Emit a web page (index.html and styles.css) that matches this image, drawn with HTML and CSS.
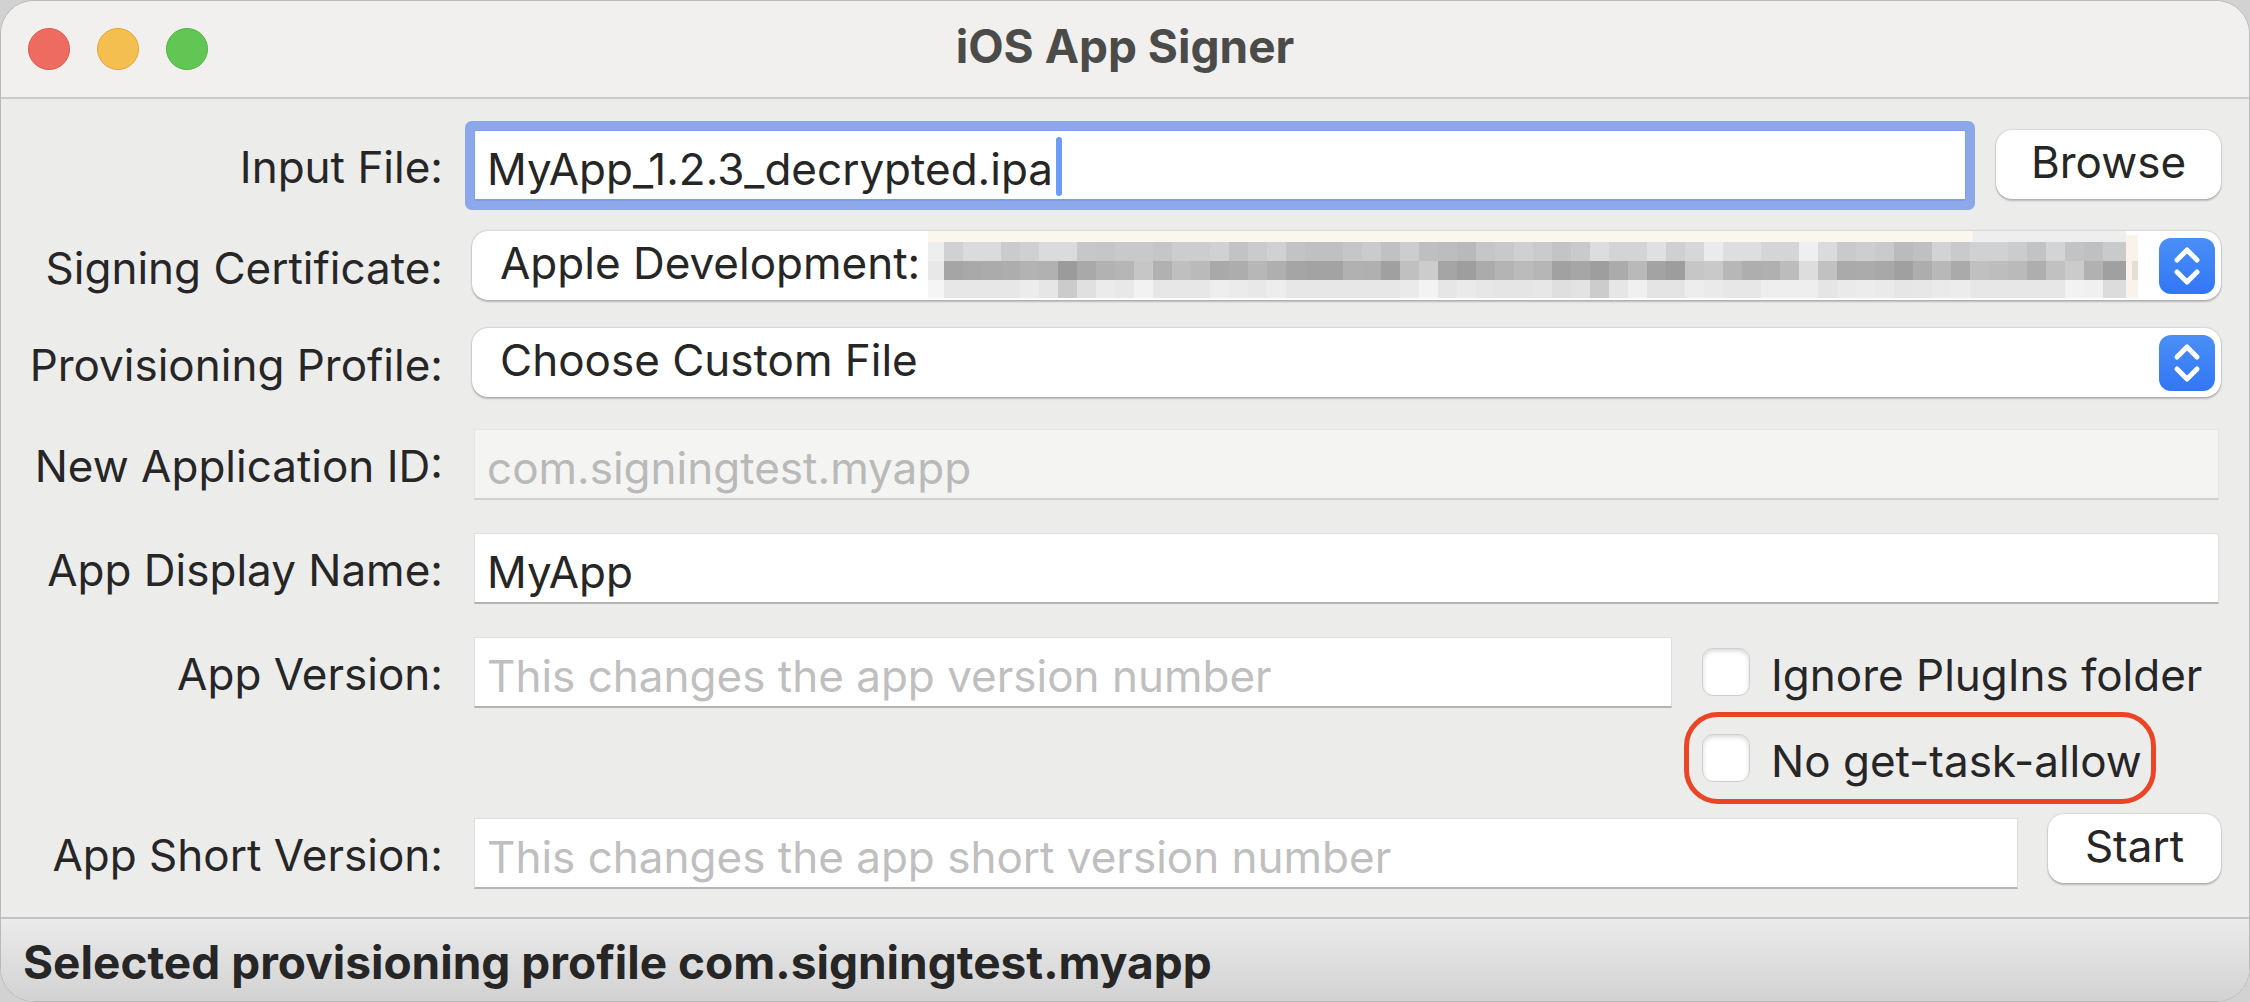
FILE: index.html
```html
<!DOCTYPE html>
<html lang="en">
<head>
  <meta charset="UTF-8" />
  <meta name="viewport" content="width=device-width, initial-scale=1.0"/>
  <title>iOS App Signer</title>
  <link rel="stylesheet" href="styles.css">
</head>
<body>
  <div class="window">
    <header class="titlebar">
      <div class="lights">
        <button class="light close" aria-label="Close"></button>
        <button class="light minimize" aria-label="Minimize"></button>
        <button class="light zoom" aria-label="Zoom"></button>
      </div>
      <h1>iOS App Signer</h1>
    </header>

    <form class="form" onsubmit="return false">
      <div class="row">
        <label class="name" for="input-file">Input File:</label>
        <div class="field focused">
          <input type="text" id="input-file" value="MyApp_1.2.3_decrypted.ipa">
          <span class="caret"></span>
        </div>
        <button class="btn browse" type="button">Browse</button>
      </div>

      <div class="row popup-row">
        <label class="name" for="certificate">Signing Certificate:</label>
        <div class="popup">
          <select id="certificate">
            <option>Apple Development:</option>
          </select>
          <svg class="mosaic" id="mosaic" viewBox="0 0 1210 67" preserveAspectRatio="none" shape-rendering="crispEdges" aria-hidden="true"></svg>
          <svg class="arrows" viewBox="0 0 56 56" aria-hidden="true">
            <path d="M18 22 L28 12 L38 22 M18 34 L28 44 L38 34"/>
          </svg>
        </div>
      </div>

      <div class="row popup-row">
        <label class="name" for="profile">Provisioning Profile:</label>
        <div class="popup">
          <select id="profile">
            <option>Choose Custom File</option>
          </select>
          <svg class="arrows" viewBox="0 0 56 56" aria-hidden="true">
            <path d="M18 22 L28 12 L38 22 M18 34 L28 44 L38 34"/>
          </svg>
        </div>
      </div>

      <div class="row">
        <label class="name" for="app-id">New Application ID:</label>
        <div class="field">
          <input type="text" id="app-id" value="com.signingtest.myapp" disabled>
        </div>
      </div>

      <div class="row name-row">
        <label class="name" for="display-name">App Display Name:</label>
        <div class="field">
          <input type="text" id="display-name" value="MyApp">
        </div>
      </div>

      <div class="row version-row">
        <label class="name" for="version">App Version:</label>
        <div class="field">
          <input type="text" id="version" placeholder="This changes the app version number">
        </div>
        <div class="checks">
          <label class="check"><input type="checkbox"> Ignore PlugIns folder</label>
          <label class="check marked"><input type="checkbox"> No get-task-allow</label>
        </div>
      </div>

      <div class="row start-row">
        <label class="name" for="short-version">App Short Version:</label>
        <div class="field">
          <input type="text" id="short-version" placeholder="This changes the app short version number">
        </div>
        <button class="btn start" type="submit">Start</button>
      </div>
    </form>

    <footer class="status">Selected provisioning profile com.signingtest.myapp</footer>
  </div>

  <script>
    // grey levels of the redacted name, two hex digits per block
    const levels = [
      { y: 11, h: 19, edge: 'ee', row: 'd0dadacacfdadac6c5c8c8c5ccccd0c2cad0c2bfbfc5cac0ccbebcb8c5c8cfcac3c9dcd3d3dfcfd6eaddddd4d4eedac9cdc9babfd2c9d0d0cbc2d3c2bfc9' },
      { y: 30, h: 19, edge: 'e8', row: 'a5a9abadb3b19ba9b2b6c6b1bfbaa9adb7afa5a3a3b1b0a0c0cca59eabb4bbb6a1a69eabb9a39dc6c9b7aeb0bcddc1aaaba8a0adb8aac0bdbaaec1cbb1a0' },
      { y: 49, h: 18, edge: 'f5', row: 'e7e7e7e7ece6cbe0ebe8f2e7e7e7eeebe8ede7e7e7e7e7e7eaf3e6eae7e5e5e7dfe3cce6f0e4e4edeae7e7eeeeeee5eaeceae6e7eaece7e7e7e7e7f2f0dc' }
    ];
    const mosaic = document.getElementById('mosaic');

    function block(x, y, w, h, fill) {
      const rect = document.createElementNS('http://www.w3.org/2000/svg', 'rect');
      rect.setAttribute('x', x);
      rect.setAttribute('y', y);
      rect.setAttribute('width', w);
      rect.setAttribute('height', h);
      rect.setAttribute('fill', fill);
      mosaic.appendChild(rect);
    }

    block(0, 0, 1045, 11, '#fbf6ee');
    block(1045, 0, 153, 11, '#eeeeee');
    block(1198, 4, 12, 63, '#f9f3ec');
    block(1204, 30, 6, 19, '#e6ddd5');

    levels.forEach(({ y, h, edge, row }) => {
      block(0, y, 16, h, '#' + edge + edge + edge);
      row.match(/../g).forEach((hex, i) => {
        const v = parseInt(hex, 16);
        const cool = y === 11 ? 2 : 0;
        block(16 + i * 19, y, i === 61 ? 23 : 19, h, `rgb(${v}, ${v + cool / 2}, ${v + cool})`);
      });
    });
  </script>
</body>
</html>
```
FILE: styles.css
```css
* {
  box-sizing: border-box;
}

body {
  margin: 0;
  background: #d2d2d2;
  color: #262626;
  font-family: Inter, "Liberation Sans", sans-serif;
  font-size: 44px;
}

input, select, button {
  font: inherit;
  color: inherit;
}

.window {
  display: flex;
  flex-direction: column;
  min-height: 100vh;
  background: #ececeb;
  border: 1px solid #b9b9b9;
  border-radius: 34px;
  overflow: hidden;
}

/* title bar */
.titlebar {
  display: grid;
  grid-template-columns: 1fr auto 1fr;
  align-items: center;
  height: 98px;
  padding: 0 27px;
  background: #f1f0ee;
  border-bottom: 2px solid #cacac9;
}

.lights {
  display: flex;
  gap: 27px;
}

.light {
  width: 42px;
  height: 42px;
  padding: 0;
  border: 1px solid;
  border-radius: 50%;
}

.close {
  background: #ed6b60;
  border-color: #dc5a4f;
}

.minimize {
  background: #f5bf4f;
  border-color: #dfa53c;
}

.zoom {
  background: #62c655;
  border-color: #50b443;
}

h1 {
  margin: 0;
  padding-bottom: 6px;
  font-size: 46px;
  font-weight: 700;
  color: #4b4b49;
}

/* form */
.form {
  padding: 31px 28px 25px 0;
}

.row {
  display: flex;
  align-items: flex-start;
}

.row + .row {
  margin-top: 27px;
}

.popup-row + .popup-row {
  margin-top: 23px;
}

.row + .name-row,
.row + .version-row {
  margin-top: 30px;
}

.row + .start-row {
  margin-top: 32px;
}

.name {
  flex: none;
  width: 442px;
  margin-right: 29px;
  line-height: 74px;
  text-align: right;
  white-space: nowrap;
}

.field {
  position: relative;
  flex: 1;
  margin: 0 2px;
}

.field input {
  display: block;
  width: 100%;
  height: 71px;
  padding: 7px 12px 0;
  background: #fff;
  border: 1px solid #dedede;
  border-bottom: 2px solid #b4b4b4;
  border-radius: 0;
  outline: none;
}

.field input::placeholder {
  color: #bfbfbf;
  opacity: 1;
}

.field input:disabled {
  background: #f4f4f3;
  border-color: #e6e6e5;
  border-bottom-color: #d0d0d0;
  color: #b9b9b9;
}

.focused input {
  border-color: #7d9de4;
  box-shadow: 0 0 0 9px #8ca8eb;
  border-radius: 2px;
}

.caret {
  position: absolute;
  left: 582px;
  top: 7px;
  width: 6px;
  height: 59px;
  border-radius: 3px;
  background: #6a9cf8;
}

.btn {
  flex: none;
  height: 69px;
  padding: 0 0 5px;
  background: #fff;
  border: none;
  border-radius: 16px;
  box-shadow: 0 0 2px rgba(0, 0, 0, 0.25), 0 2px 2px rgba(0, 0, 0, 0.2);
}

.browse {
  width: 225px;
  margin-left: 28px;
}

.start {
  width: 173px;
  margin-left: 28px;
}

.popup {
  position: relative;
  flex: 1;
}

.popup select {
  display: block;
  appearance: none;
  width: 100%;
  height: 69px;
  padding: 0 80px 5px 28px;
  background: #fff;
  border: none;
  border-radius: 16px;
  box-shadow: 0 0 2px rgba(0, 0, 0, 0.3), 0 2px 2px rgba(0, 0, 0, 0.2);
}

.arrows {
  position: absolute;
  top: 7px;
  right: 6px;
  width: 56px;
  height: 56px;
  border-radius: 12px;
  background: linear-gradient(#4a8ff6, #3276f6);
  pointer-events: none;
}

.arrows path {
  fill: none;
  stroke: #fff;
  stroke-width: 5;
  stroke-linecap: round;
  stroke-linejoin: round;
}

.mosaic {
  position: absolute;
  top: 0;
  left: 456px;
  width: calc(100% - 539px);
  height: 67px;
  pointer-events: none;
}

.checks {
  display: flex;
  flex-direction: column;
  align-items: flex-start;
  gap: 38px;
  width: 519px;
  margin-left: 28px;
  padding-top: 11px;
}

.check {
  position: relative;
  display: flex;
  align-items: flex-start;
  gap: 21px;
  height: 48px;
  line-height: 54px;
  white-space: nowrap;
}

.check input {
  appearance: none;
  width: 48px;
  height: 48px;
  margin: 0;
  background: #fff;
  border: 1px solid #cfcfcf;
  border-radius: 11px;
  box-shadow: inset 0 2px 4px rgba(0, 0, 0, 0.16);
}

.marked::after {
  content: "";
  position: absolute;
  inset: -22px -14px -22px -18px;
  border: 5px solid #ec4526;
  border-radius: 34px;
  pointer-events: none;
}

.start-row .name,
.start-row .field {
  padding-top: 4px;
}

/* status bar */
.status {
  flex: 1;
  padding: 15px 22px 0;
  background: linear-gradient(#ebebeb, #d2d2d2);
  border-top: 2px solid #c4c4c4;
  font-size: 46px;
  font-weight: 700;
}
```
